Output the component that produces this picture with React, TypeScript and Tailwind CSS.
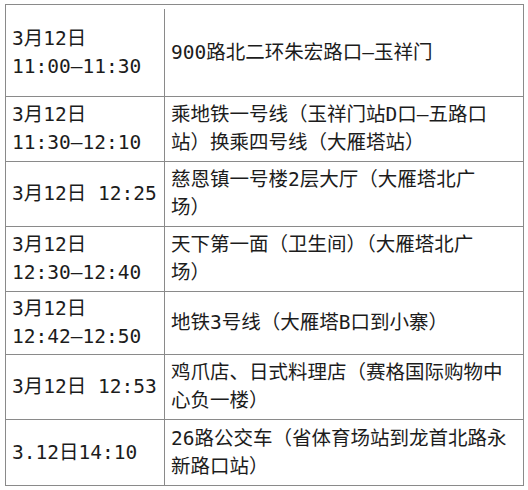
const ROWS: { time: string[]; place: string[]; h: string }[] = [
  { time: ['3月12日', '11:00–11:30'], place: ['900路北二环朱宏路口–玉祥门'], h: 'h-[92px] border-b pt-[4px]' },
  { time: ['3月12日', '11:30–12:10'], place: ['乘地铁一号线（玉祥门站D口–五路口', '站）换乘四号线（大雁塔站）'], h: 'h-[65px] border-b' },
  { time: ['3月12日 12:25'], place: ['慈恩镇一号楼2层大厅（大雁塔北广', '场）'], h: 'h-[65px] border-b' },
  { time: ['3月12日', '12:30–12:40'], place: ['天下第一面（卫生间）（大雁塔北广', '场）'], h: 'h-[65px] border-b' },
  { time: ['3月12日', '12:42–12:50'], place: ['地铁3号线（大雁塔B口到小寨）'], h: 'h-[63px] border-b' },
  { time: ['3月12日 12:53'], place: ['鸡爪店、日式料理店（赛格国际购物中', '心负一楼）'], h: 'h-[65px] border-b' },
  { time: ['3.12日14:10'], place: ['26路公交车（省体育场站到龙首北路永', '新路口站）'], h: 'h-[65px]' },
]

export default function App() {
  return (
    <div className="w-[528px] h-[490px] bg-white pt-[4px] pl-[5px] font-['DejaVu_Sans_Mono','Noto_Sans_CJK_SC',monospace] text-[19.5px] leading-[28px] text-[#1c1c1c]">
      <div className="w-[519px] border border-[#8a8a8a]">
        {ROWS.map((r, i) => (
          <div key={i} className={`flex border-[#8a8a8a] ${r.h}`}>
            <div className="w-[159px] shrink-0 flex flex-col justify-center border-r border-[#8a8a8a] pl-[6px] whitespace-pre">
              {r.time.map((t) => (
                <div key={t}>{t}</div>
              ))}
            </div>
            <div className="flex-1 flex flex-col justify-center pl-[6px] whitespace-nowrap">
              {r.place.map((p) => (
                <div key={p}>{p}</div>
              ))}
            </div>
          </div>
        ))}
      </div>
    </div>
  )
}
